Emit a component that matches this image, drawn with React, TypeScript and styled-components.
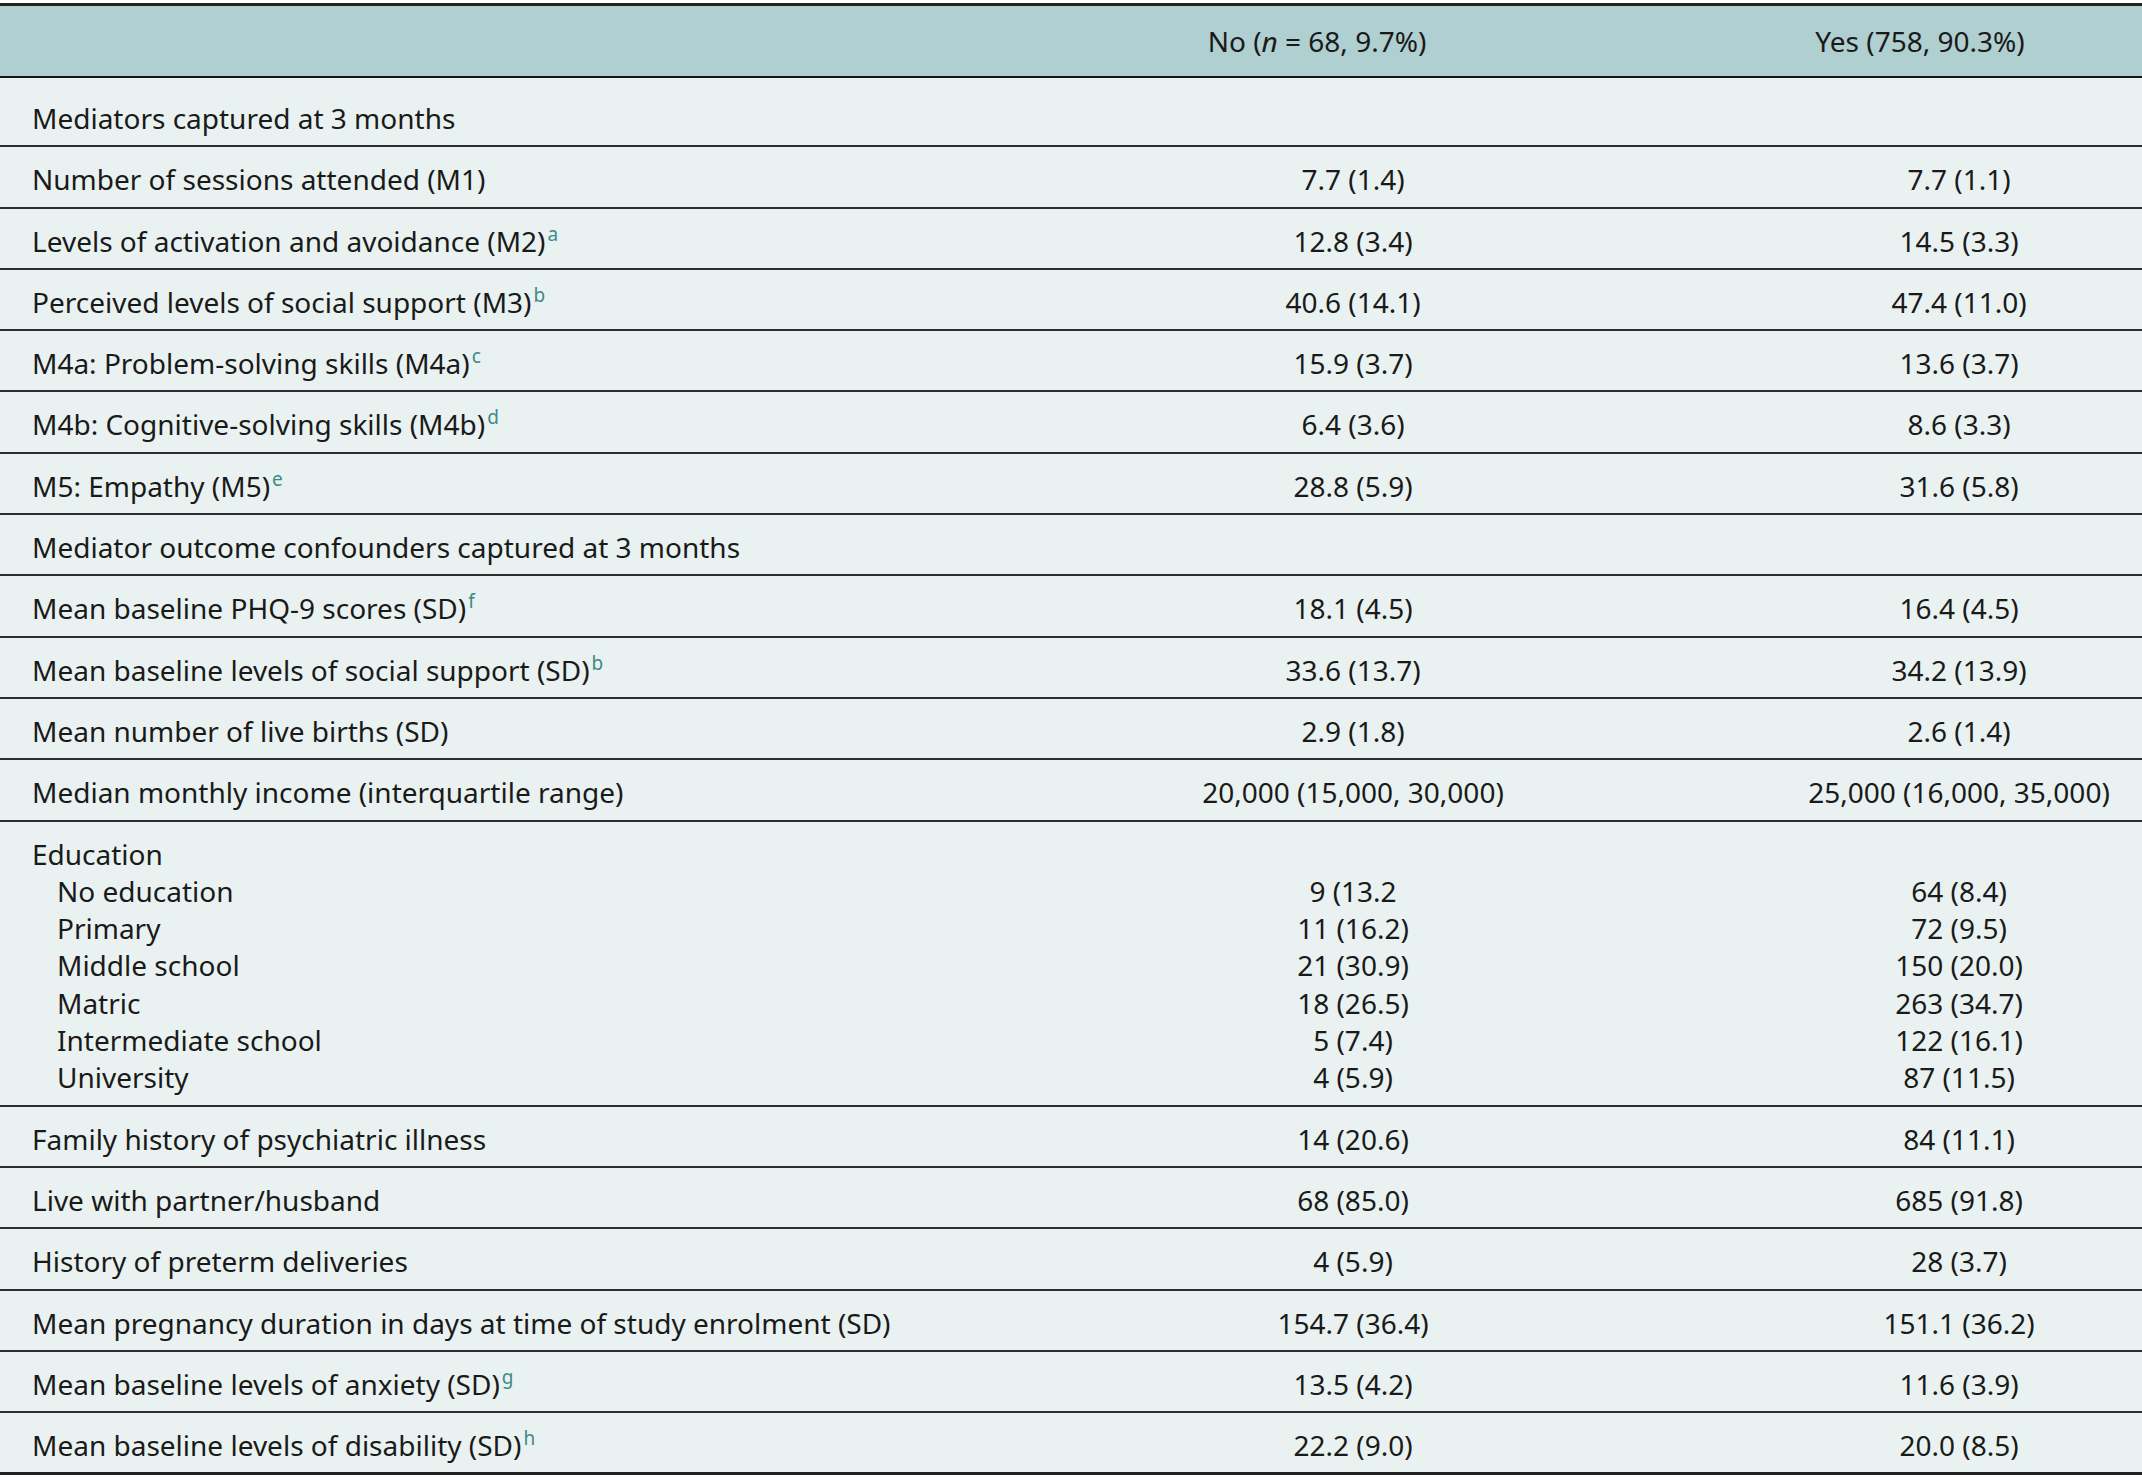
import React from 'react';
import styled, { createGlobalStyle } from 'styled-components';

const GlobalStyle = createGlobalStyle`
  body {
    margin: 0;
    background: #ffffff;
    font-family: 'Noto Sans', 'Open Sans', sans-serif;
    color: #1a1a1a;
  }
`;

const COLS = '930px 846px 1fr';

const Page = styled.div`
  width: 2142px;
  padding-top: 3px;
`;

const Table = styled.div`
  border-top: 3px solid #222;
  border-bottom: 3px solid #222;
  font-size: 28px;
`;

const HeaderRow = styled.div`
  display: grid;
  grid-template-columns: ${COLS};
  height: 70px;
  align-items: center;
  background-color: #b0cfd0;
  border-bottom: 2px solid #151515;
`;

const HeaderCell = styled.div<{ $shift?: number }>`
  text-align: center;
  padding-right: ${(p) => p.$shift ?? 0}px;
  line-height: 37px;
`;

const Row = styled.div<{ $first?: boolean; $last?: boolean }>`
  display: grid;
  grid-template-columns: ${COLS};
  background-color: #e9f2f1;
  padding: ${(p) => (p.$first ? '22px' : '14px')} 0 8px 0;
  line-height: 37.3px;
  border-bottom: ${(p) => (p.$last ? 'none' : '2px solid #2e2e2e')};
`;

const LabelCell = styled.div`
  padding-left: 32px;
  white-space: nowrap;
`;

const ValueCell = styled.div`
  text-align: center;
  white-space: nowrap;
`;

const SubLine = styled.div`
  padding-left: 25px;
`;

const Sup = styled.sup`
  color: #3d8b87;
  font-size: 19px;
  line-height: 0;
  vertical-align: 11px;
  margin-left: 2px;
`;

interface RowData {
  label: string;
  sup?: string;
  no?: string;
  yes?: string;
}

const groupA: RowData[] = [
  { label: 'Number of sessions attended (M1)', no: '7.7 (1.4)', yes: '7.7 (1.1)' },
  { label: 'Levels of activation and avoidance (M2)', sup: 'a', no: '12.8 (3.4)', yes: '14.5 (3.3)' },
  { label: 'Perceived levels of social support (M3)', sup: 'b', no: '40.6 (14.1)', yes: '47.4 (11.0)' },
  { label: 'M4a: Problem-solving skills (M4a)', sup: 'c', no: '15.9 (3.7)', yes: '13.6 (3.7)' },
  { label: 'M4b: Cognitive-solving skills (M4b)', sup: 'd', no: '6.4 (3.6)', yes: '8.6 (3.3)' },
  { label: 'M5: Empathy (M5)', sup: 'e', no: '28.8 (5.9)', yes: '31.6 (5.8)' },
  { label: 'Mediator outcome confounders captured at 3 months' },
  { label: 'Mean baseline PHQ-9 scores (SD)', sup: 'f', no: '18.1 (4.5)', yes: '16.4 (4.5)' },
  { label: 'Mean baseline levels of social support (SD)', sup: 'b', no: '33.6 (13.7)', yes: '34.2 (13.9)' },
  { label: 'Mean number of live births (SD)', no: '2.9 (1.8)', yes: '2.6 (1.4)' },
  { label: 'Median monthly income (interquartile range)', no: '20,000 (15,000, 30,000)', yes: '25,000 (16,000, 35,000)' },
];

const education: RowData[] = [
  { label: 'No education', no: '9 (13.2', yes: '64 (8.4)' },
  { label: 'Primary', no: '11 (16.2)', yes: '72 (9.5)' },
  { label: 'Middle school', no: '21 (30.9)', yes: '150 (20.0)' },
  { label: 'Matric', no: '18 (26.5)', yes: '263 (34.7)' },
  { label: 'Intermediate school', no: '5 (7.4)', yes: '122 (16.1)' },
  { label: 'University', no: '4 (5.9)', yes: '87 (11.5)' },
];

const groupB: RowData[] = [
  { label: 'Family history of psychiatric illness', no: '14 (20.6)', yes: '84 (11.1)' },
  { label: 'Live with partner/husband', no: '68 (85.0)', yes: '685 (91.8)' },
  { label: 'History of preterm deliveries', no: '4 (5.9)', yes: '28 (3.7)' },
  { label: 'Mean pregnancy duration in days at time of study enrolment (SD)', no: '154.7 (36.4)', yes: '151.1 (36.2)' },
  { label: 'Mean baseline levels of anxiety (SD)', sup: 'g', no: '13.5 (4.2)', yes: '11.6 (3.9)' },
  { label: 'Mean baseline levels of disability (SD)', sup: 'h', no: '22.2 (9.0)', yes: '20.0 (8.5)' },
];

const DataRow: React.FC<{ row: RowData; last?: boolean }> = ({ row, last }) => (
  <Row $last={last}>
    <LabelCell>
      {row.label}
      {row.sup && <Sup>{row.sup}</Sup>}
    </LabelCell>
    <ValueCell>{row.no}</ValueCell>
    <ValueCell>{row.yes}</ValueCell>
  </Row>
);

const App: React.FC = () => (
  <Page>
    <GlobalStyle />
    <Table>
      <HeaderRow>
        <HeaderCell />
        <HeaderCell $shift={72}>
          No (<i>n</i> = 68, 9.7%)
        </HeaderCell>
        <HeaderCell $shift={78}>Yes (758, 90.3%)</HeaderCell>
      </HeaderRow>
      <Row $first>
        <LabelCell>Mediators captured at 3 months</LabelCell>
        <ValueCell />
        <ValueCell />
      </Row>
      {groupA.map((r) => (
        <DataRow key={r.label} row={r} />
      ))}
      <Row>
        <LabelCell>
          Education
          {education.map((e) => (
            <SubLine key={e.label}>{e.label}</SubLine>
          ))}
        </LabelCell>
        <ValueCell>
          <div>&nbsp;</div>
          {education.map((e) => (
            <div key={e.label}>{e.no}</div>
          ))}
        </ValueCell>
        <ValueCell>
          <div>&nbsp;</div>
          {education.map((e) => (
            <div key={e.label}>{e.yes}</div>
          ))}
        </ValueCell>
      </Row>
      {groupB.map((r, i) => (
        <DataRow key={r.label} row={r} last={i === groupB.length - 1} />
      ))}
    </Table>
  </Page>
);

export default App;
